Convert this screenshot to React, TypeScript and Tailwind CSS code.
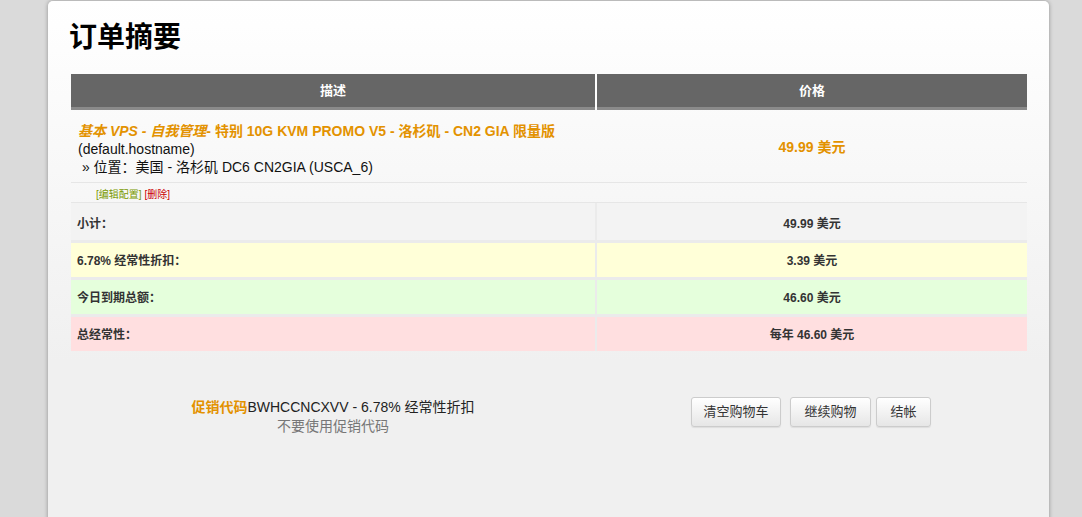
import React from 'react';

const font = 'font-["Liberation_Sans","Noto_Sans_CJK_SC",sans-serif]';

const summaryRows = [
  { label: '小计：', value: '49.99 美元', bg: 'bg-[#f3f3f3]', h: 'h-[37px] pt-[4px]' },
  { label: '6.78% 经常性折扣：', value: '3.39 美元', bg: 'bg-[#ffffd8]', h: 'h-[34px] pt-[1px]' },
  { label: '今日到期总额：', value: '46.60 美元', bg: 'bg-[#e5ffdc]', h: 'h-[34px] pt-[1px]' },
  { label: '总经常性：', value: '每年 46.60 美元', bg: 'bg-[#ffdfe0]', h: 'h-[34px] pt-[1px]' },
];

const Button = ({ label, width }: { label: string; width: string }) => (
  <button
    className={`${width} h-[30px] rounded-[3px] border border-[#cccccc] bg-[linear-gradient(180deg,#ffffff,#e6e6e6)] text-[13px] text-[#333] shadow-[0_1px_1px_rgba(0,0,0,0.08)]`}
  >
    {label}
  </button>
);

const App = () => {
  return (
    <div className={`min-h-screen bg-[#dadada] overflow-hidden ${font}`}>
      <div className="ml-[48px] mt-[1px] w-[1001px] h-[560px] rounded-[5px] bg-[linear-gradient(180deg,#ffffff_0px,#f0f0f0_360px)] shadow-[0_0_4px_rgba(0,0,0,0.35)] pl-[21px] pt-[17px]">
        <h1 className="text-[28px] font-bold leading-[40px] text-black">订单摘要</h1>

        <div className="ml-[2px] mt-[16px] w-[956px]">
          {/* header */}
          <div className="grid grid-cols-[524px_430px] gap-x-[2px] bg-white">
            <div className="h-[36px] bg-[#666666] border-b-[3px] border-[#8a8a8a] flex items-center justify-center text-[13px] font-bold text-white">
              描述
            </div>
            <div className="h-[36px] bg-[#666666] border-b-[3px] border-[#8a8a8a] flex items-center justify-center text-[13px] font-bold text-white">
              价格
            </div>
          </div>

          {/* product row */}
          <div className="grid grid-cols-[524px_430px] gap-x-[2px] border-b border-[#e6e6e6]">
            <div className="h-[72px] pl-[7px] pt-[12px] text-[14px] leading-[18px] text-[#111]">
              <div className="font-bold text-[#e39200]">
                <i>基本 VPS - 自我管理</i>- 特别 10G KVM PROMO V5 - 洛杉矶 - CN2 GIA 限量版
              </div>
              <div>(default.hostname)</div>
              <div>&nbsp;» 位置：美国 - 洛杉矶 DC6 CN2GIA (USCA_6)</div>
            </div>
            <div className="flex items-center justify-center pt-[3px] text-[14px] font-bold text-[#e39200]">
              49.99 美元
            </div>
          </div>

          {/* actions row */}
          <div className="h-[20px] border-b border-[#e6e6e6] pl-[25px] pt-[4px] flex items-center text-[10px]">
            <span className="text-[#7a9a01]">[编辑配置]</span>
            <span className="ml-[3px] text-[#cc0000]">[删除]</span>
          </div>

          {/* totals */}
          <div className="grid grid-cols-[524px_430px] gap-x-[2px] gap-y-[3px] bg-[#ebebeb]">
            {summaryRows.map((row) => (
              <React.Fragment key={row.label}>
                <div className={`${row.h} ${row.bg} pl-[6px] flex items-center text-[12px] font-bold text-[#333]`}>
                  {row.label}
                </div>
                <div className={`${row.h} ${row.bg} flex items-center justify-center text-[12px] font-bold text-[#333]`}>
                  {row.value}
                </div>
              </React.Fragment>
            ))}
          </div>

          {/* promo + buttons */}
          <div className="mt-[46px] grid grid-cols-[524px_430px] gap-x-[2px]">
            <div className="flex flex-col items-center pt-[1px] text-[14px] leading-[19px]">
              <div className="text-[#222]">
                <span className="font-bold text-[#e39200]">促销代码</span>BWHCCNCXVV - 6.78% 经常性折扣
              </div>
              <div className="text-[#777]">不要使用促销代码</div>
            </div>
            <div className="flex justify-center pr-[2px]">
              <Button label="清空购物车" width="w-[90px]" />
              <div className="ml-[9px]">
                <Button label="继续购物" width="w-[81px]" />
              </div>
              <div className="ml-[5px]">
                <Button label="结帐" width="w-[55px]" />
              </div>
            </div>
          </div>
        </div>
      </div>
    </div>
  );
};

export default App;
